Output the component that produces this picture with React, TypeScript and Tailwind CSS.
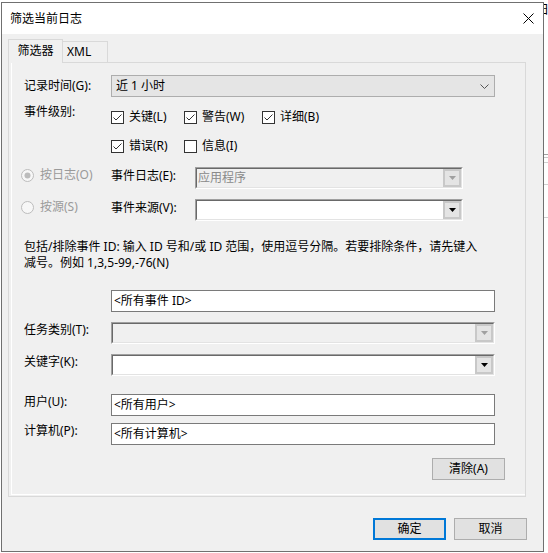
import React from 'react';

const FONT = "font-['Noto_Sans','Noto_Sans_CJK_SC',sans-serif]";

function Check({ checked, label, w }: { checked: boolean; label: string; w: string }) {
    return (
        <div className={`flex items-center h-[16px] ${w}`}>
            <svg width="13" height="13" viewBox="0 0 13 13" className="shrink-0">
                <rect x="0.5" y="0.5" width="12" height="12" fill="#fff" stroke="#333" />
                {checked && <path d="M2.5 6.5 L5 9 L10.5 3.5" fill="none" stroke="#333" strokeWidth="1" />}
            </svg>
            <span className="ml-[5px] leading-[16px] whitespace-nowrap">{label}</span>
        </div>
    );
}

function Radio({ checked, label }: { checked: boolean; label: string }) {
    return (
        <div className="ml-[12px] w-[90px] flex items-center h-[16px]">
            <svg width="13" height="13" viewBox="0 0 13 13" className="shrink-0">
                <circle cx="6.5" cy="6.5" r="6" fill="#f7f7f7" stroke="#bcbcbc" />
                {checked && <circle cx="6.5" cy="6.5" r="3" fill="#bcbcbc" />}
            </svg>
            <span className="ml-[6px] leading-[16px] text-[#9a9a9a] whitespace-nowrap">{label}</span>
        </div>
    );
}

// old style sunken combobox with the classic drop button
function Combo({ w, disabled, text }: { w: string; disabled?: boolean; text?: string }) {
    return (
        <div className={`${w} h-[22px] border-t border-l border-t-[#a0a0a0] border-l-[#a0a0a0] border-b border-r border-b-white border-r-white`}>
            <div className={`h-full flex border-t border-l border-t-[#696969] border-l-[#696969] border-b border-r border-b-[#e3e3e3] border-r-[#e3e3e3] ${disabled ? 'bg-[#f0f0f0]' : 'bg-white'}`}>
                <div className={`flex-1 leading-[18px] pl-[1px] ${disabled ? 'text-[#8a8a8a]' : ''}`}>{text}</div>
                <div className="w-[18px] h-[18px] border-2 border-[#c8c8c8] bg-[#e4e4e4] flex items-center justify-center">
                    <svg width="7" height="4" viewBox="0 0 7 4">
                        <polygon points="0,0 7,0 3.5,4" fill={disabled ? '#a0a0a0' : '#000'} />
                    </svg>
                </div>
            </div>
        </div>
    );
}

function TextBox({ value }: { value: string }) {
    return (
        <div className="w-[384px] h-[22px] border border-[#7a7a7a] bg-white leading-[20px] pl-[2px]">
            {value}
        </div>
    );
}

function Btn({ label, primary, cls }: { label: string; primary?: boolean; cls?: string }) {
    return (
        <div className={`w-[73px] h-[22px] flex items-center justify-center bg-[#e1e1e1] ${primary ? 'border-2 border-[#0078d7]' : 'border border-[#adadad]'} ${cls ?? ''}`}>
            {label}
        </div>
    );
}

export default function App() {
    return (
        <div className={`w-[548px] h-[553px] bg-white flex overflow-hidden text-[12px] text-black ${FONT}`}>
            <div className="ml-[1px] mt-[2px] w-[543px] h-[550px] shrink-0 border border-[#707070] bg-[#f0f0f0] flex flex-col">
                {/* title bar */}
                <div className="h-[31px] bg-white flex items-center justify-between">
                    <span className="pl-[8px]">筛选当前日志</span>
                    <svg width="11" height="11" viewBox="0 0 11 11" className="mr-[9px]">
                        <path d="M0.5 0.5 L10.5 10.5 M10.5 0.5 L0.5 10.5" stroke="#000" strokeWidth="1" />
                    </svg>
                </div>

                {/* tabs */}
                <div className="mt-[5px] ml-[6px] flex items-end h-[23px]">
                    <div className="relative z-10 -mb-px w-[55px] h-[24px] border border-b-0 border-[#d9d9d9] bg-[#f0f0f0] flex items-center justify-center pb-[1px]">
                        筛选器
                    </div>
                    <div className="w-[45px] h-[21px] border border-l-0 border-b-0 border-[#d9d9d9] bg-[#f0f0f0] pl-[4px] leading-[20px]">
                        XML
                    </div>
                </div>

                {/* tab panel */}
                <div className="ml-[6px] w-[518px] h-[435px] border border-[#d9d9d9] bg-[#f0f0f0] pl-[2px] pb-px">
                    <div className="h-full w-full flex flex-col border-l border-b border-white">
                        <div className="mt-[12px] flex items-center h-[22px] pl-[12px]">
                            <span className="w-[87px]">记录时间(G):</span>
                            <div className="w-[384px] h-[22px] border border-[#adadad] bg-[#e5e5e5] flex items-center justify-between pl-[4px] pr-[5px]">
                                <span>近 1 小时</span>
                                <svg width="9" height="5" viewBox="0 0 9 5">
                                    <path d="M0.5 0.5 L4.5 4.5 L8.5 0.5" fill="none" stroke="#555" strokeWidth="1" />
                                </svg>
                            </div>
                        </div>

                        <div className="mt-[7px] flex pl-[12px]">
                            <span className="w-[87px] leading-[16px]">事件级别:</span>
                            <div className="flex flex-col">
                                <div className="mt-[5px] flex">
                                    <Check checked label="关键(L)" w="w-[73px]" />
                                    <Check checked label="警告(W)" w="w-[78px]" />
                                    <Check checked label="详细(B)" w="w-[80px]" />
                                </div>
                                <div className="mt-[13px] flex">
                                    <Check checked label="错误(R)" w="w-[73px]" />
                                    <Check checked={false} label="信息(I)" w="w-[78px]" />
                                </div>
                            </div>
                        </div>

                        <div className="mt-[13px] flex items-start h-[22px] -ml-[3px]">
                            <Radio checked label="按日志(O)" />
                            <span className="w-[84px] leading-[16px] mt-[1px]">事件日志(E):</span>
                            <Combo w="w-[268px]" disabled text="应用程序" />
                        </div>

                        <div className="mt-[10px] flex items-start h-[22px] -ml-[3px]">
                            <Radio checked={false} label="按源(S)" />
                            <span className="w-[84px] leading-[16px] mt-[1px]">事件来源(V):</span>
                            <Combo w="w-[268px]" />
                        </div>

                        <p className="mt-[18px] pl-[12px] leading-[16px] whitespace-nowrap">
                            包括/排除事件 ID: 输入 ID 号和/或 ID 范围，使用逗号分隔。若要排除条件，请先键入
                            <br />
                            减号。例如 1,3,5-99,-76(N)
                        </p>

                        <div className="mt-[19px] pl-[99px]">
                            <TextBox value="<所有事件 ID>" />
                        </div>

                        <div className="mt-[10px] flex items-start h-[22px] pl-[12px]">
                            <span className="w-[87px] leading-[16px]">任务类别(T):</span>
                            <Combo w="w-[384px]" disabled />
                        </div>

                        <div className="mt-[10px] flex items-start h-[22px] pl-[12px]">
                            <span className="w-[87px] leading-[16px]">关键字(K):</span>
                            <Combo w="w-[384px]" />
                        </div>

                        <div className="mt-[18px] flex items-start pl-[12px]">
                            <span className="w-[87px] leading-[16px]">用户(U):</span>
                            <TextBox value="<所有用户>" />
                        </div>

                        <div className="mt-[7px] flex items-start pl-[12px]">
                            <span className="w-[87px] leading-[16px]">计算机(P):</span>
                            <TextBox value="<所有计算机>" />
                        </div>

                        <div className="mt-[13px] pl-[420px]">
                            <Btn label="清除(A)" cls="h-[21px]" />
                        </div>
                    </div>
                </div>

                {/* dialog buttons */}
                <div className="mt-[21px] flex justify-end pr-[16px] gap-[8px]">
                    <Btn label="确定" primary />
                    <Btn label="取消" />
                </div>
            </div>

            {/* bit of the window behind */}
            <div className="w-[4px] shrink-0 overflow-hidden flex flex-col">
                <span className="mt-[3px] -ml-[7px] leading-[14px] text-[12px]">日</span>
                <div className="mt-[137px] h-px bg-[#a0a0a0]" />
                <div className="mt-[2px] h-px bg-[#c8c8c8]" />
                <div className="mt-[4px] h-px bg-[#d0d0d0]" />
                <div className="mt-[21px] h-px bg-[#d0d0d0]" />
                <div className="mt-[32px] h-px bg-[#d0d0d0]" />
            </div>
        </div>
    );
}
